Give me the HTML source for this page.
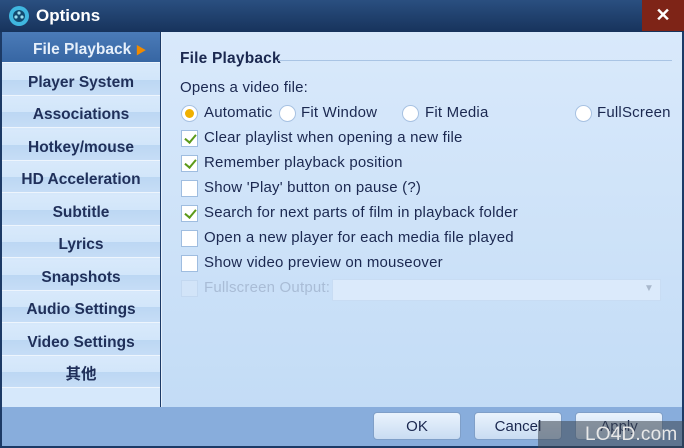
<!DOCTYPE html><html><head><style>
*{margin:0;padding:0;box-sizing:border-box}
body{width:684px;height:448px;overflow:hidden;font-family:"Liberation Sans","Noto Sans CJK SC",sans-serif;font-size:15px;color:#1b2850;background:#1c3a66;position:relative}
.tb{position:absolute;left:0;top:0;width:684px;height:32px;background:linear-gradient(#2a4f80,#17335c)}
.tt{position:absolute;left:36px;top:6px;color:#fff;font-weight:bold;font-size:17px}
.close{position:absolute;left:642px;top:0;width:42px;height:31px;background:#7e2417;color:#fff;font-size:18px;text-align:center;line-height:30px;font-weight:bold}
.side{position:absolute;left:2px;top:32px;width:158px;height:375px;background:#d6e8fb}
.it{position:absolute;left:0;width:158px;height:31px;background:linear-gradient(#d8e9fb 0,#d2e6fa 50%,#bcd7f3 50%,#c6ddf6);border-bottom:1px solid #eef5fd;text-align:center;font-weight:bold;font-size:15.5px;line-height:36px;color:#20305a}
.it.sel{background:linear-gradient(#4b7bb8,#3766a3);color:#e6effa;text-align:left;padding-left:31px}
.main{position:absolute;left:161px;top:32px;width:521px;height:375px;background:linear-gradient(#d9e9fb,#c3dcf6);border-left:1px solid #e6f0fc}
.bot{position:absolute;left:2px;top:407px;width:680px;height:39px;background:#88addc}
.btn{position:absolute;top:412px;width:88px;height:28px;border:1px solid #7f9fc8;border-radius:4px;background:linear-gradient(#eaf3fd,#c9dcf2);text-align:center;line-height:28px;font-size:15px}
.t{position:absolute;white-space:nowrap;letter-spacing:0.2px}
.cb{position:absolute;width:17px;height:17px;background:#fff;border:1px solid #9fbde0}
.cb.c::after{content:"";position:absolute;left:5px;top:1px;width:5px;height:9px;border:solid #5c9a1a;border-width:0 2px 2px 0;transform:rotate(40deg)}
.rd{position:absolute;width:17px;height:17px;border-radius:50%;background:#fff;border:1px solid #a8c2e2}
.rd.on::after{content:"";position:absolute;left:3px;top:3px;width:9px;height:9px;border-radius:50%;background:#f0b000}
</style></head><body>
<div class="tb"></div>
<svg style="position:absolute;left:8px;top:5px" width="22" height="22"><circle cx="11" cy="11" r="10" fill="#3fb7e0"/><circle cx="11" cy="11" r="6" fill="#134a70"/><circle cx="11" cy="8" r="1.6" fill="#9de"/><circle cx="8" cy="12" r="1.6" fill="#9de"/><circle cx="14" cy="12" r="1.6" fill="#9de"/></svg>
<div class="tt">Options</div>
<div class="close">✕</div>
<div class="side">
<div class="it sel" style="top:0">File Playback <span style="color:#f08a00;font-size:11px">▶</span></div>
<div class="it" style="top:33px">Player System</div>
<div class="it" style="top:65px">Associations</div>
<div class="it" style="top:98px">Hotkey/mouse</div>
<div class="it" style="top:130px">HD Acceleration</div>
<div class="it" style="top:163px">Subtitle</div>
<div class="it" style="top:195px">Lyrics</div>
<div class="it" style="top:228px">Snapshots</div>
<div class="it" style="top:260px">Audio Settings</div>
<div class="it" style="top:293px">Video Settings</div>
<div class="it" style="top:325px">其他</div>
</div>
<div class="main"></div>
<div class="t" style="left:180px;top:50px;font-weight:bold;font-size:15.5px">File Playback</div>
<div style="position:absolute;left:278px;top:60px;width:394px;height:1px;background:#a9c4e4"></div>
<div class="t" style="left:180px;top:79px">Opens a video file:</div>
<div class="rd on" style="left:181px;top:105px"></div><div class="t" style="left:204px;top:104px">Automatic</div>
<div class="rd" style="left:279px;top:105px"></div><div class="t" style="left:301px;top:104px">Fit Window</div>
<div class="rd" style="left:402px;top:105px"></div><div class="t" style="left:425px;top:104px">Fit Media</div>
<div class="rd" style="left:575px;top:105px"></div><div class="t" style="left:597px;top:104px">FullScreen</div>
<div class="cb c" style="left:181px;top:130px"></div><div class="t" style="left:204px;top:129px">Clear playlist when opening a new file</div>
<div class="cb c" style="left:181px;top:155px"></div><div class="t" style="left:204px;top:154px">Remember playback position</div>
<div class="cb" style="left:181px;top:180px"></div><div class="t" style="left:204px;top:179px">Show 'Play' button on pause (?)</div>
<div class="cb c" style="left:181px;top:205px"></div><div class="t" style="left:204px;top:204px">Search for next parts of film in playback folder</div>
<div class="cb" style="left:181px;top:230px"></div><div class="t" style="left:204px;top:229px">Open a new player for each media file played</div>
<div class="cb" style="left:181px;top:255px"></div><div class="t" style="left:204px;top:254px">Show video preview on mouseover</div>
<div class="cb" style="left:181px;top:280px;background:#d2e4f8;border-color:#c3d8f0"></div><div class="t" style="left:204px;top:279px;color:#a9bcd6">Fullscreen Output:</div>
<div style="position:absolute;left:332px;top:279px;width:329px;height:22px;background:#dbeafb;border:1px solid #c8dcf3"></div>
<div class="t" style="left:644px;top:283px;color:#a9b8cc;font-size:10px">▼</div>
<div class="bot"></div>
<div class="btn" style="left:373px">OK</div>
<div class="btn" style="left:474px">Cancel</div>
<div class="btn" style="left:575px">Apply</div>
<div style="position:absolute;left:538px;top:421px;width:146px;height:27px;background:rgba(60,70,80,.55)"></div>
<div class="t" style="left:585px;top:424px;color:#e8e8e8;font-size:19px">LO4D.com</div>
</body></html>
